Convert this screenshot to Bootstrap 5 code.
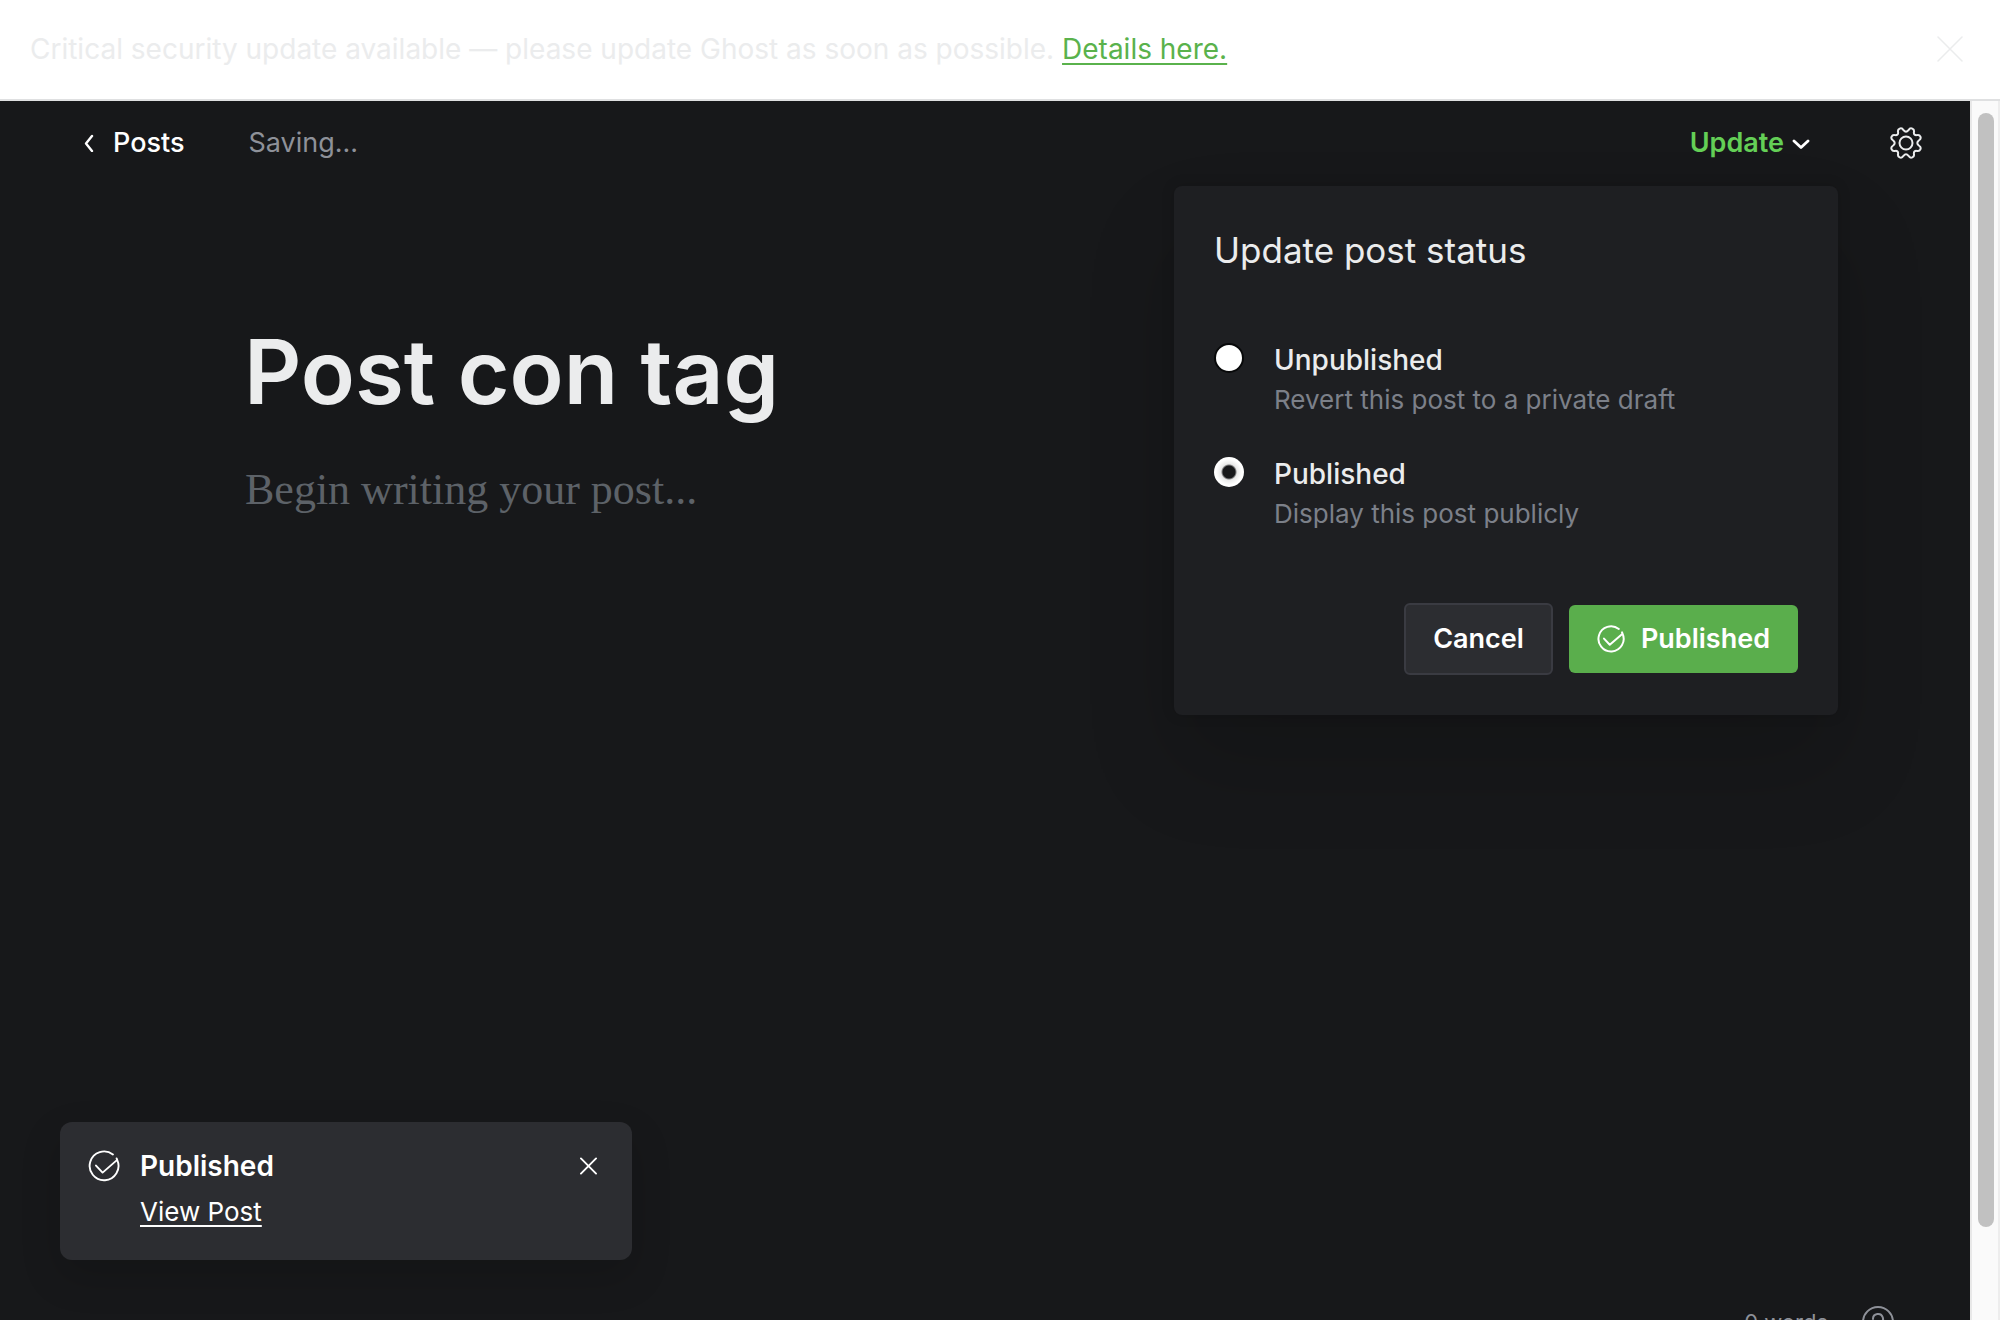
<!DOCTYPE html>
<html lang="en" data-bs-theme="dark">
<head>
<meta charset="utf-8">
<meta name="viewport" content="width=device-width, initial-scale=1">
<title>Post con tag - Ghost editor</title>
<link href="https://cdn.jsdelivr.net/npm/bootstrap@5.3.0/dist/css/bootstrap.min.css" rel="stylesheet">
<style>
  :root { --ink: #ebeced; --night: #17181a; --muted: #7c8089; --panel: #1e1f22; --raised: #2c2d31; }
  body { font-family: Inter, "Open Sans", sans-serif; font-size: 28px; line-height: 36px; color: var(--ink); background: var(--night); }
  svg { display: block; fill: none; stroke: currentColor; stroke-linecap: round; stroke-linejoin: round; flex-shrink: 0; }
  .bare { background: none; border: 0; padding: 0; color: inherit; }

  .alert-bar { background: #fff; color: #ebeced; border-bottom: 2px solid #dfe0e1; padding: 31px 37px 32px 30px; }
  .alert-bar a { color: #5ab24c; text-underline-offset: 4px; text-decoration-thickness: 2px; }

  .editor { background: var(--night); min-width: 0; }
  .editor-top { padding: 24px 48px 0 80px; }
  .crumb { color: #fff; font-size: 27px; font-weight: 500; gap: 16px; }
  .saving { color: #8e9199; font-size: 27px; margin-left: 64px; }
  .update-btn { color: #64cf56; font-size: 27px; font-weight: 600; gap: 8px; }
  .update-btn svg { color: #fff; }
  .gear-btn { margin-left: 80px; }

  .canvas-area { padding: 155px 244px 0; }
  .post-title { font-size: 89px; font-weight: 600; line-height: 112px; color: var(--ink); caret-color: transparent; }
  .post-body { font-family: "Liberation Serif", serif; font-size: 44px; line-height: 56px; margin-top: 34px; padding-left: 1px; resize: none; color: var(--ink); }
  .post-body::placeholder { color: #5d6268; opacity: 1; }
  .bare:focus { outline: 0; }

  .status-menu { top: 85px; right: 132px; width: 664px; padding: 40px; background: var(--panel); border-radius: 8px; box-shadow: 0 50px 90px rgba(0,0,0,.16), 0 0 14px rgba(0,0,0,.14); }
  .status-menu h2 { font-size: 35px; font-weight: 400; line-height: 48px; margin-bottom: 66px; color: var(--ink); }
  .choice { gap: 30px; margin-bottom: 34px; padding-left: 0; }
  .choice-title { font-weight: 500; line-height: 40px; }
  .choice-help { font-size: 26px; line-height: 40px; color: var(--muted); }
  .choice input { appearance: none; width: 30px; height: 30px; margin: 3px 0 0; flex-shrink: 0; border-radius: 50%; background: #fff; border: 2px solid #08090a; }
  .choice input:checked { border: 0; background: radial-gradient(circle, #17181a 0 6px, #e8e8e8 8px, #fff 13px); }
  .menu-actions { gap: 16px; margin-top: 69px; }
  .menu-actions .btn { font-size: 27px; font-weight: 600; line-height: 36px; border-radius: 6px; color: #fff; }
  .btn-plain { background: var(--raised); border: 2px solid #3a3b42; padding: 16px 27px; }
  .btn-go { background: #5aae4c; border: 0; padding: 16px 28px; gap: 16px; }

  .note { left: 60px; bottom: 60px; width: 572px; padding: 26px 35px 30px 28px; background: var(--raised); color: #fff; border-radius: 12px; box-shadow: 0 16px 40px rgba(0,0,0,.16); }
  .note-title { font-weight: 600; }
  .note a { color: #fff; font-size: 26px; text-underline-offset: 4px; text-decoration-thickness: 2px; }
  .note-link { padding-left: 52px; margin-top: 9px; }

  .foot { height: 14px; padding-right: 76px; gap: 34px; color: #8e9199; font-size: 22px; line-height: 32px; }

  .rail { width: 30px; background: #fafafa; border-left: 2px solid #e8e8e8; border-right: 2px solid #ededed; padding: 12px 4px 93px 6px; }
  .rail-thumb { background: #c1c1c1; border-radius: 8px; }
</style>
</head>
<body>
<div class="d-flex flex-column vh-100 overflow-hidden">
  <div class="alert-bar d-flex align-items-center justify-content-between">
    <div>Critical security update available — please update Ghost as soon as possible. <a href="#">Details here.</a></div>
    <button class="bare" type="button" aria-label="Dismiss">
      <svg width="26" height="26" viewBox="0 0 26 26" stroke-width="1.5"><path d="M1 1l24 24M25 1L1 25"/></svg>
    </button>
  </div>

  <div class="d-flex flex-grow-1 overflow-hidden">
    <main class="editor flex-grow-1 d-flex flex-column position-relative">
      <header class="editor-top d-flex align-items-center">
        <a class="crumb d-flex align-items-center text-decoration-none" href="#">
          <svg width="17" height="18" viewBox="0 0 17 18" stroke-width="2.4"><path d="M12 2L6 9.500l6 7.500"/></svg>
          <span>Posts</span>
        </a>
        <span class="saving">Saving...</span>
        <button class="bare update-btn d-flex align-items-center ms-auto" type="button" aria-expanded="true">
          <span>Update</span>
          <svg width="18" height="12" viewBox="0 0 18 12" stroke-width="2.800"><path d="M2 4l7 6.500L16 4"/></svg>
        </button>
        <button class="bare gear-btn" type="button" aria-label="Settings">
          <svg width="32" height="32" viewBox="0 0 32 32" stroke-width="2"><circle cx="16" cy="16" r="6.500"/><path d="M13.500 3.200Q16 6.200 18.500 3.200Q20 .6 22.300 1.600Q24.600 2.600 23.900 5.200Q23.600 8.400 26.800 8.100Q29.400 7.400 30.400 9.700Q31.400 12 28.800 13.500Q25.800 16 28.800 18.500Q31.400 20 30.400 22.300Q29.400 24.600 26.800 23.900Q23.600 23.600 23.900 26.800Q24.600 29.400 22.300 30.400Q20 31.400 18.500 28.800Q16 25.800 13.500 28.800Q12 31.400 9.700 30.400Q7.400 29.400 8.100 26.800Q8.400 23.600 5.200 23.900Q2.600 24.600 1.600 22.300Q.6 20 3.200 18.500Q6.200 16 3.200 13.500Q.6 12 1.600 9.700Q2.600 7.400 5.200 8.100Q8.400 8.400 8.100 5.200Q7.400 2.600 9.700 1.600Q12 .6 13.500 3.200Z"/></svg>
        </button>
      </header>

      <section class="canvas-area flex-grow-1">
        <input class="bare post-title d-block w-100" type="text" value="Post con tag" aria-label="Post title">
        <textarea class="bare post-body d-block w-100" rows="2" placeholder="Begin writing your post..." aria-label="Post body"></textarea>
      </section>

      <footer class="foot d-flex justify-content-end align-items-start">
        <span>0 words</span>
        <svg width="32" height="32" viewBox="0 0 32 32" stroke-width="2"><circle cx="16" cy="16" r="15"/><path d="M11 13a5 5 0 1 1 7 4.500c-1.500.8-2 1.500-2 3.500M16 25v.1"/></svg>
      </footer>

      <form class="status-menu position-absolute">
        <h2>Update post status</h2>
        <div class="choice d-flex">
          <input type="radio" name="status" id="st-draft" aria-describedby="help-draft">
          <div>
            <label class="choice-title d-block" for="st-draft">Unpublished</label>
            <div class="choice-help" id="help-draft">Revert this post to a private draft</div>
          </div>
        </div>
        <div class="choice d-flex">
          <input type="radio" name="status" id="st-live" aria-describedby="help-live" checked>
          <div>
            <label class="choice-title d-block" for="st-live">Published</label>
            <div class="choice-help" id="help-live">Display this post publicly</div>
          </div>
        </div>
        <div class="menu-actions d-flex justify-content-end align-items-center">
          <button class="btn btn-plain" type="button">Cancel</button>
          <button class="btn btn-go d-flex align-items-center" type="button">
            <svg width="28" height="28" viewBox="0 0 34 34" stroke-width="2.400"><path d="M26.500 4.800A15.300 15.300 0 1 0 31 10.500L15.500 24l-7-7.500M31 10.500l-.6-1.600"/></svg>
            <span>Published</span>
          </button>
        </div>
      </form>

      <div class="note position-absolute" role="status">
        <div class="d-flex align-items-center">
          <svg width="32" height="36" viewBox="0 0 34 34" stroke-width="2"><path d="M26.500 4.800A15.300 15.300 0 1 0 31 10.500L15.500 24l-7-7.500M31 10.500l-.6-1.600"/></svg>
          <span class="note-title ms-3 ps-1 flex-grow-1">Published</span>
          <button class="bare" type="button" aria-label="Close">
            <svg width="17" height="18" viewBox="0 0 18 18" stroke-width="2"><path d="M1 1l16 16M17 1L1 17"/></svg>
          </button>
        </div>
        <div class="note-link"><a href="#">View Post</a></div>
      </div>
    </main>

    <div class="rail d-flex flex-shrink-0" aria-hidden="true"><div class="rail-thumb flex-grow-1"></div></div>
  </div>
</div>
<script src="https://cdn.jsdelivr.net/npm/bootstrap@5.3.0/dist/js/bootstrap.bundle.min.js"></script>
</body>
</html>
